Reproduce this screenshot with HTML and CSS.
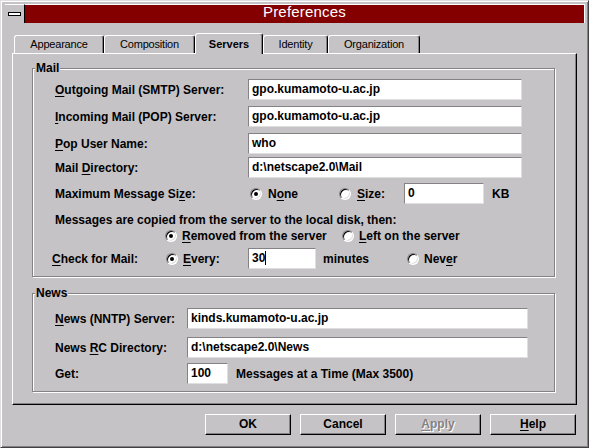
FILE: index.html
```html
<!DOCTYPE html>
<html>
<head>
<meta charset="utf-8">
<link rel="stylesheet" href="styles.css">
</head>
<body>
<div class="window">
  <div class="titlebar">
    <div class="sysmenu"><span class="sysbar"></span></div>
    <div class="caption">Preferences</div>
  </div>
  <div class="tabs">
    <div class="tab t-appearance">Appearance</div>
    <div class="tab t-composition">Composition</div>
    <div class="tab t-servers active">Servers</div>
    <div class="tab t-identity">Identity</div>
    <div class="tab t-organization">Organization</div>
  </div>
  <div class="panel">
    <div class="group mail">
      <div class="legend">Mail</div>
      <div class="row r1"><span class="label lw-mail"><u>O</u>utgoing Mail (SMTP) Server:</span><div class="field f-mail">gpo.kumamoto-u.ac.jp</div></div>
      <div class="row r2"><span class="label lw-mail"><u>I</u>ncoming Mail (POP) Server:</span><div class="field f-mail">gpo.kumamoto-u.ac.jp</div></div>
      <div class="row r3"><span class="label lw-mail"><u>P</u>op User Name:</span><div class="field f-mail">who</div></div>
      <div class="row r4"><span class="label lw-mail">Mail <u>D</u>irectory:</span><div class="field f-mail">d:\netscape2.0\Mail</div></div>
      <div class="row r5">
        <span class="label lw-mail">Maximum Message Si<u>z</u>e:</span>
        <span class="opt o-none"><span class="radio on"></span><span>N<u>o</u>ne</span></span>
        <span class="opt o-size"><span class="radio"></span><span><u>S</u>ize:</span></span>
        <div class="field f-size">0</div>
        <span class="kb">KB</span>
      </div>
      <div class="row text r6">Messages are copied from the server to the local disk, then:</div>
      <div class="row text r7">
        <span class="opt o-removed"><span class="radio on"></span><span><u>R</u>emoved from the server</span></span>
        <span class="opt"><span class="radio"></span><span><u>L</u>eft on the server</span></span>
      </div>
      <div class="row r8">
        <span class="label lw-check"><u>C</u>heck for Mail:</span>
        <span class="opt o-every"><span class="radio on"></span><span><u>E</u>very:</span></span>
        <div class="field f-mins">30<span class="caret"></span></div>
        <span class="minutes">minutes</span>
        <span class="opt"><span class="radio"></span><span>Nev<u>e</u>r</span></span>
      </div>
    </div>
    <div class="group news">
      <div class="legend">News</div>
      <div class="row n1"><span class="label lw-news"><u>N</u>ews (NNTP) Server:</span><div class="field f-news">kinds.kumamoto-u.ac.jp</div></div>
      <div class="row n2"><span class="label lw-news">News <u>R</u>C Directory:</span><div class="field f-news">d:\netscape2.0\News</div></div>
      <div class="row n3"><span class="label lw-news">Get:</span><div class="field f-get">100</div><span class="after-get">Messages at a Time (Max 3500)</span></div>
    </div>
  </div>
  <div class="buttons">
    <div class="btn">OK</div>
    <div class="btn">Cancel</div>
    <div class="btn disabled"><u>A</u>pply</div>
    <div class="btn"><u>H</u>elp</div>
  </div>
</div>
</body>
</html>
```

FILE: styles.css
```css
* { box-sizing: border-box; }
html, body { margin: 0; padding: 0; background: #c6c3c6; }
body {
  font-family: "Liberation Sans", Arial, sans-serif;
  font-size: 12px;
  font-weight: bold;
  color: #000;
}
u { text-decoration: underline; text-underline-offset: 2px; }

.window {
  width: 589px;
  height: 448px;
  background: #c6c3c6;
  border: 1px solid;
  border-color: #dedfde #424142 #424142 #dedfde;
  box-shadow: inset 1px 1px 0 #fff, inset -1px -1px 0 #848284;
  padding: 3px 3px 0 4px;
  display: flex;
  flex-direction: column;
}

/* title bar */
.titlebar { display: flex; height: 19px; }
.sysmenu {
  width: 20px;
  background: #c6c3c6;
  border-top: 1px solid #fff;
  border-right: 1px solid #000;
  display: flex;
  align-items: center;
  justify-content: center;
}
.sysbar {
  width: 13px;
  height: 4px;
  background: #fff;
  border: 1px solid #000;
}
.caption {
  flex: 1;
  background: #840000;
  color: #fff;
  border-top: 1px solid #fff;
  border-right: 1px solid #fff;
  font-weight: normal;
  font-size: 15px;
  letter-spacing: 0.2px;
  line-height: 14px;
  text-align: center;
}

/* tabs */
.tabs {
  display: flex;
  align-items: flex-end;
  height: 20px;
  margin: 10px 0 0 9px;
}
.tab {
  height: 18px;
  border-top: 1px solid #fff;
  border-left: 1px solid #fff;
  border-right: 1px solid #000;
  box-shadow: inset -1px 0 0 #848284;
  border-radius: 3px 3px 0 0;
  font-weight: normal;
  font-size: 11px;
  letter-spacing: -0.2px;
  line-height: 16px;
  text-align: center;
  background: #c6c3c6;
}
.tab.active {
  height: 21px;
  margin-bottom: -1px;
  padding-top: 2px;
  font-weight: bold;
  letter-spacing: 0;
  position: relative;
  z-index: 1;
}
.t-appearance { width: 90px; }
.t-composition { width: 91px; }
.t-servers { width: 68px; }
.t-identity { width: 65px; }
.t-organization { width: 92px; }

/* panel */
.panel {
  width: 565px;
  height: 352px;
  margin-left: 7px;
  border: 1px solid;
  border-color: #fff #000 #000 #fff;
  box-shadow: inset -1px -1px 0 #848284;
  padding: 14px 0 0 19px;
}

.group {
  width: 523px;
  border: 1px solid #848284;
  box-shadow: 1px 1px 0 #fff, inset 1px 1px 0 #fff;
  padding: 0 0 7px 22px;
}
.group.news { margin-top: 16px; }
.legend {
  display: table;
  margin: -7px 0 0 -20px;
  padding: 0 1px;
  line-height: 12px;
  background: #c6c3c6;
}

.row { display: flex; align-items: center; height: 21px; white-space: nowrap; }
.row.text { height: 14px; }
.r1 { margin-top: 5px; }
.r2 { margin-top: 6px; }
.r3 { margin-top: 6px; }
.r4 { margin-top: 3px; }
.r5 { margin-top: 5px; }
.r6 { margin-top: 9px; }
.r7 { margin-top: 2px; padding-left: 110px; }
.r8 { margin-top: 5px; }
.n1 { margin-top: 9px; }
.n2 { margin-top: 8px; }
.n3 { margin-top: 5px; }

.label { display: block; }
.lw-mail { width: 193px; }
.lw-check { width: 114px; margin-left: -3px; }
.lw-news { width: 132px; }

.field {
  height: 21px;
  background: #fff;
  border: 1px solid;
  border-color: #848284 #dedfde #dedfde #848284;
  padding-left: 3px;
  line-height: 19px;
  white-space: nowrap;
  overflow: hidden;
}
.f-mail { width: 274px; }
.f-size { width: 80px; }
.f-mins { width: 68px; }
.f-news { width: 341px; }
.f-get { width: 41px; }
.caret {
  display: inline-block;
  width: 1px;
  height: 14px;
  background: #000;
  vertical-align: -3px;
}

.opt { display: flex; align-items: center; gap: 5px; }
.o-none { width: 89px; margin-left: 2px; gap: 6px; }
.o-size { width: 65px; gap: 6px; }
.o-removed { width: 177px; }
.o-every { width: 82px; }
.kb { margin-left: 8px; }
.minutes { margin-left: 7px; width: 84px; }
.after-get { margin-left: 8px; }

.radio {
  width: 12px;
  height: 12px;
  flex: none;
  border-radius: 50%;
  background: #fff;
  border: 1px solid;
  border-color: #848284 #fff #fff #848284;
  box-shadow: inset 1px 1px 0 #000, inset -1px -1px 0 #dedfde;
  display: flex;
  align-items: center;
  justify-content: center;
}
.radio.on::after {
  content: "";
  width: 4px;
  height: 4px;
  border-radius: 50%;
  background: #000;
}

/* buttons */
.buttons {
  display: flex;
  justify-content: flex-end;
  gap: 9px;
  margin: 9px 9px 0 0;
}
.btn {
  width: 86px;
  height: 21px;
  border: 1px solid;
  border-color: #fff #000 #000 #fff;
  box-shadow: inset -1px -1px 0 #848284;
  text-align: center;
  line-height: 19px;
}
.btn.disabled { color: #848284; text-shadow: 1px 1px 0 #fff; }
```
